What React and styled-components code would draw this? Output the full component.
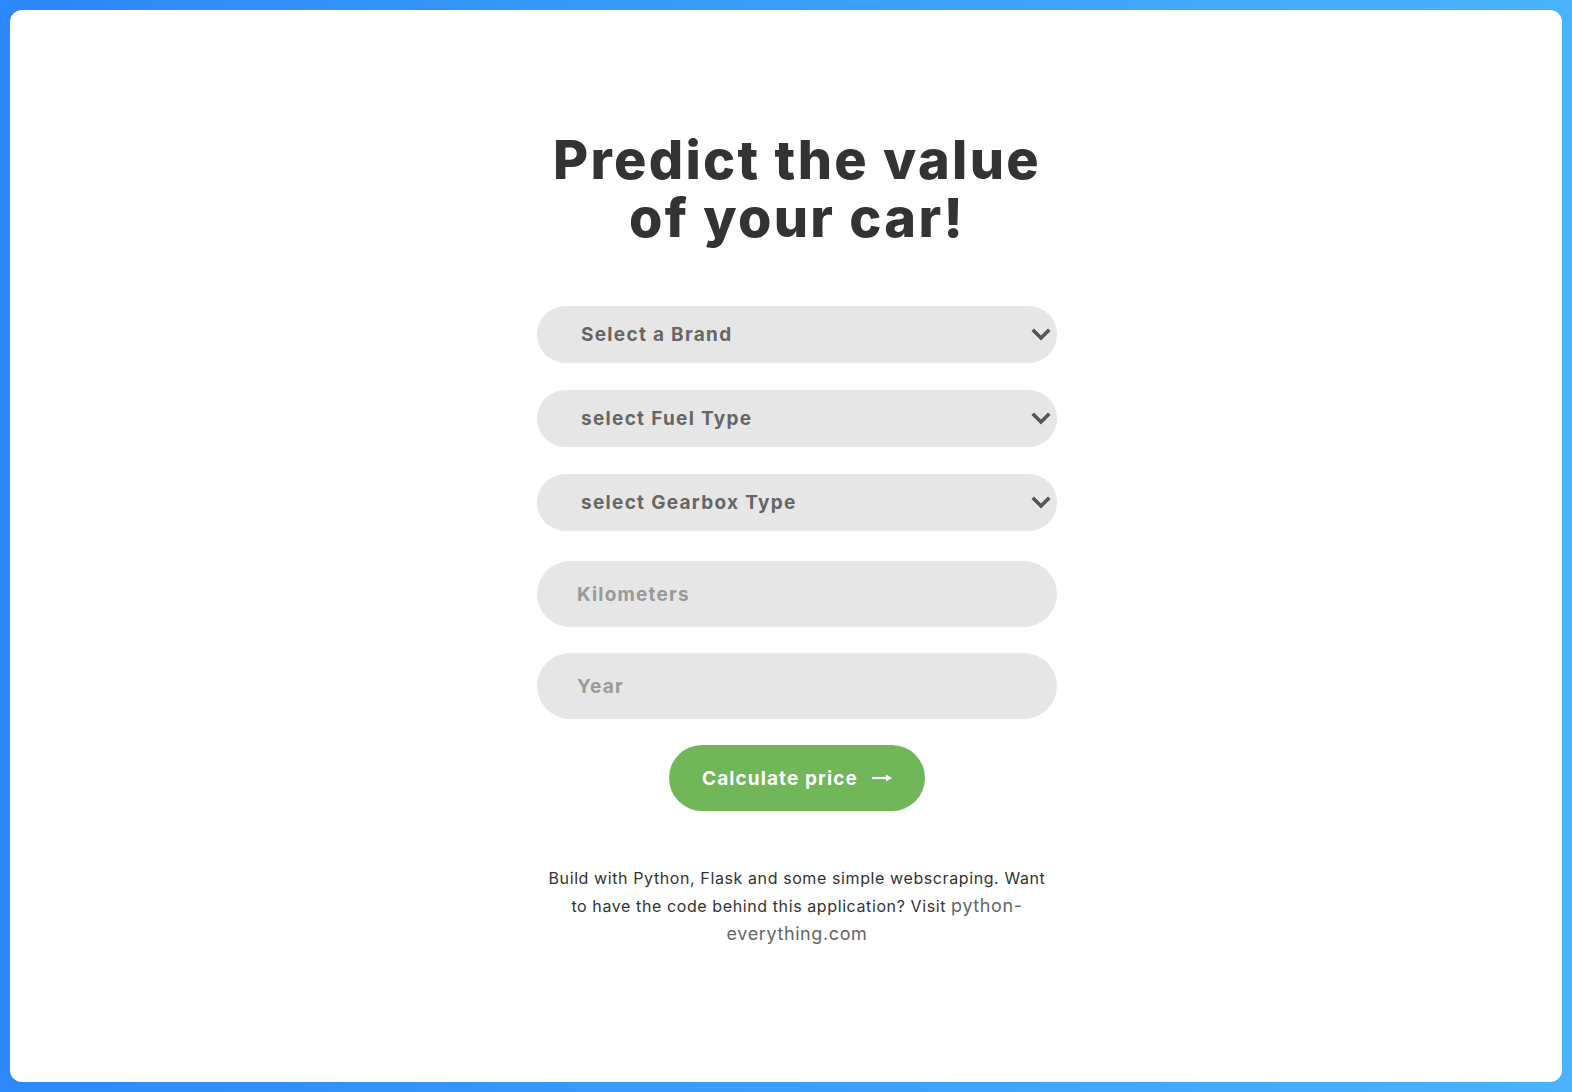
import React from "react";
import styled, { createGlobalStyle } from "styled-components";

const Global = createGlobalStyle`
  html, body { margin: 0; padding: 0; }
  body {
    background: linear-gradient(to right, #2d88fb, #4ab3fc);
    font-family: "Inter", "Noto Sans", sans-serif;
  }
  * { box-sizing: border-box; }
`;

const Frame = styled.div`
  padding: 10px;
  min-height: 1092px;
  display: flex;
`;

const Card = styled.main`
  flex: 1;
  background: #fff;
  border-radius: 12px;
  display: flex;
  flex-direction: column;
  align-items: center;
  padding: 121px 0 0 22px;
`;

const Title = styled.h1`
  margin: 0;
  font-family: "Inter", sans-serif;
  font-weight: 800;
  font-size: 54px;
  line-height: 58px;
  color: #333;
  text-align: center;
  letter-spacing: 2.3px;
`;

const Form = styled.form`
  width: 520px;
  margin-top: 59px;
  display: flex;
  flex-direction: column;
`;

const SelectWrap = styled.div`
  position: relative;
  height: 57px;
  margin-bottom: 27px;
  &:nth-of-type(3) { margin-bottom: 30px; }
`;

const Select = styled.select`
  appearance: none;
  width: 100%;
  height: 100%;
  border: none;
  border-radius: 29px;
  background: #e6e6e6;
  padding: 0 0 0 44px;
  font-family: "Inter", sans-serif;
  font-weight: 700;
  font-size: 19px;
  letter-spacing: 1.3px;
  color: #666;
  outline: none;
`;

const Chevron = styled.svg`
  position: absolute;
  right: 6px;
  top: 50%;
  transform: translateY(-50%);
  width: 20px;
  height: 14px;
  pointer-events: none;
`;

const Input = styled.input`
  width: 100%;
  height: 66px;
  border: none;
  border-radius: 33px;
  background: #e6e6e6;
  padding: 0 0 0 40px;
  font-family: "Inter", sans-serif;
  font-weight: 700;
  font-size: 19px;
  letter-spacing: 1.2px;
  color: #666;
  outline: none;
  margin-bottom: 26px;
  &::placeholder { color: #999; }
`;

const Button = styled.button`
  align-self: center;
  width: 256px;
  height: 66px;
  border: none;
  border-radius: 33px;
  background: #72b65a;
  color: #fff;
  font-family: "Inter", sans-serif;
  font-weight: 700;
  font-size: 19px;
  letter-spacing: 1.1px;
  display: flex;
  align-items: center;
  justify-content: center;
  gap: 14px;
  cursor: pointer;
`;

const Arrow = styled.svg`
  width: 20px;
  height: 10px;
`;

const Footer = styled.p`
  width: 510px;
  margin: 54px 0 0;
  text-align: center;
  font-family: "Inter", sans-serif;
  font-size: 16px;
  line-height: 27px;
  letter-spacing: 0.6px;
  color: #333;
`;

const Link = styled.a`
  color: #666;
  font-size: 18px;
  letter-spacing: 0.6px;
  text-decoration: none;
`;

const ChevronIcon = () => (
  <Chevron viewBox="0 0 20 14">
    <path d="M3 3 L10 10 L17 3" fill="none" stroke="#555" strokeWidth="3.6" strokeLinecap="square" />
  </Chevron>
);

const ArrowIcon = () => (
  <Arrow viewBox="0 0 20 10">
    <path d="M0 5 H15" stroke="#fff" strokeWidth="2.2" />
    <path d="M14 1.5 L20 5 L14 8.5 Z" fill="#fff" />
  </Arrow>
);

const SelectField = ({ label }) => (
  <SelectWrap>
    <Select defaultValue="">
      <option value="" disabled>{label}</option>
    </Select>
    <ChevronIcon />
  </SelectWrap>
);

export default function App() {
  return (
    <>
      <Global />
      <Frame>
        <Card>
          <Title>Predict the value<br />of your car!</Title>
          <Form onSubmit={(e) => e.preventDefault()}>
            <SelectField label="Select a Brand" />
            <SelectField label="select Fuel Type" />
            <SelectField label="select Gearbox Type" />
            <Input placeholder="Kilometers" />
            <Input placeholder="Year" />
            <Button type="submit">Calculate price <ArrowIcon /></Button>
          </Form>
          <Footer>
            Build with Python, Flask and some simple webscraping. Want to have the code behind this application? Visit <Link href="#">python-everything.com</Link>
          </Footer>
        </Card>
      </Frame>
    </>
  );
}
